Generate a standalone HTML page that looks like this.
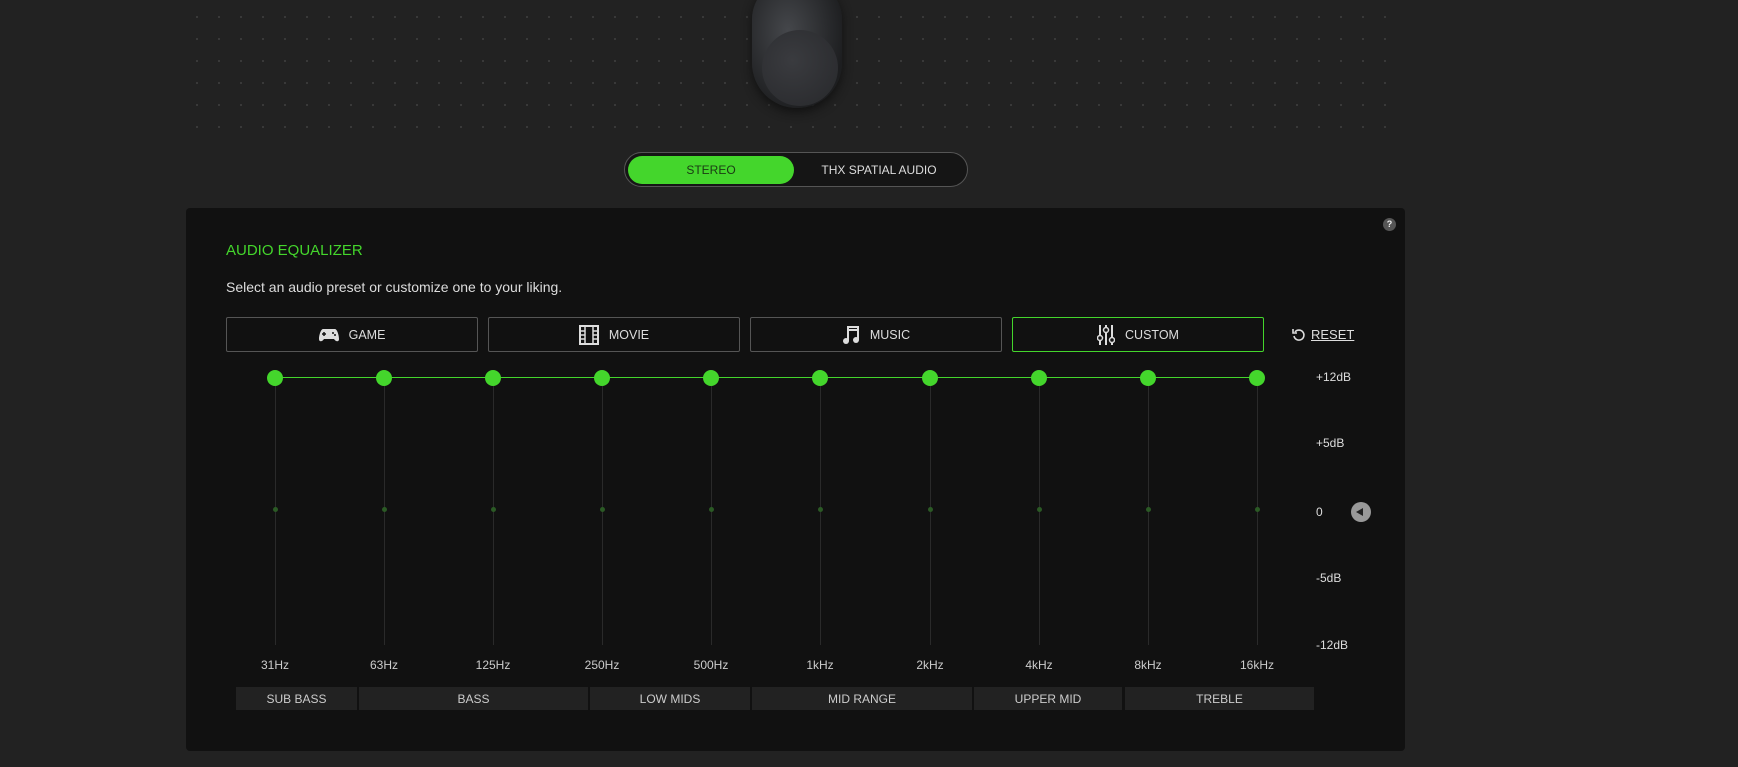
<!DOCTYPE html>
<html><head><style>
*{margin:0;padding:0;box-sizing:border-box}
body{width:1738px;height:767px;background:#222;position:relative;overflow:hidden;font-family:"Liberation Sans",sans-serif;color:#ddd}
.a{position:absolute}
.dots{left:186px;top:6px;width:1220px;height:130px;background-image:radial-gradient(circle,#3a3a3a 1px,transparent 1.3px);background-size:22px 22px}
.panel{left:186px;top:208px;width:1219px;height:543px;background:#111;border-radius:4px}
.btn{top:317px;height:35px;width:252px;border:1px solid #555;border-radius:2px;display:flex;align-items:center;justify-content:center;font-size:12.5px;color:#ddd;gap:10px}
.lbl{font-size:12px;color:#ddd}
.track{width:1px;background:#2a2a2a;top:378px;height:267px}
.dot{width:16px;height:16px;border-radius:50%;background:#44d62c;top:370px}
.z{width:5px;height:5px;border-radius:50%;background:#2b5a25;top:507px}
.freq{top:658px;font-size:12px;color:#ccc;width:80px;text-align:center}
.cat{top:687px;height:23px;background:#222;font-size:12px;color:#ccc;display:flex;align-items:center;justify-content:center}
</style></head><body>
<div class="a dots"></div>
<div class="a" style="left:752px;top:-20px;width:90px;height:128px;border-radius:40px 40px 46px 46px;background:radial-gradient(ellipse at 40% 40%,#45474b,#1d1e20 75%);box-shadow:0 4px 10px #111"></div>
<div class="a" style="left:762px;top:30px;width:76px;height:76px;border-radius:38px;background:radial-gradient(ellipse at 40% 40%,#3a3b3f,#27282b)"></div>
<div class="a" style="left:624px;top:152px;width:344px;height:35px;border:1px solid #555;border-radius:18px;background:#151515"></div>
<div class="a" style="left:628px;top:156px;width:166px;height:28px;border-radius:14px;background:#44d62c;color:#1a3a14;font-size:12px;display:flex;align-items:center;justify-content:center">STEREO</div>
<div class="a" style="left:794px;top:156px;width:170px;height:28px;color:#ddd;font-size:12px;display:flex;align-items:center;justify-content:center">THX SPATIAL AUDIO</div>
<div class="a panel"></div>
<div class="a" style="left:1383px;top:218px;width:13px;height:13px;border-radius:50%;background:#555;color:#eee;font-size:9px;font-weight:bold;text-align:center;line-height:13px">?</div>
<div class="a" style="left:226px;top:242px;font-size:15px;color:#44d62c">AUDIO EQUALIZER</div>
<div class="a" style="left:226px;top:279px;font-size:14px;color:#ddd">Select an audio preset or customize one to your liking.</div>
<div class="a btn" style="left:226px"><svg width="20" height="14" viewBox="0 0 20 14"><path d="M4 1h12c2 0 4 6 4 10 0 3-3 3-5 0H5c-2 3-5 3-5 0C0 7 2 1 4 1z" fill="#ddd"/><path d="M5 4v4M3 6h4" stroke="#111" stroke-width="1.5"/><circle cx="14" cy="5" r="1" fill="#111"/><circle cx="16" cy="7" r="1" fill="#111"/></svg>GAME</div>
<div class="a btn" style="left:488px"><svg width="20" height="20" viewBox="0 0 20 20"><rect x="1" y="1" width="18" height="18" fill="none" stroke="#ddd" stroke-width="2"/><path d="M6 1v18M14 1v18M1 6h5M1 10h5M1 14h5M14 6h5M14 10h5M14 14h5" stroke="#ddd" stroke-width="1.5"/></svg>MOVIE</div>
<div class="a btn" style="left:750px"><svg width="18" height="20" viewBox="0 0 18 20"><path d="M6 16V2h10v13M6 5h10" stroke="#ddd" stroke-width="2" fill="none"/><circle cx="4" cy="16" r="3" fill="#ddd"/><circle cx="14" cy="15" r="3" fill="#ddd"/></svg>MUSIC</div>
<div class="a btn" style="left:1012px;border-color:#44d62c"><svg width="18" height="20" viewBox="0 0 18 20"><path d="M3 0v20M9 0v20M15 0v20" stroke="#ddd" stroke-width="2"/><circle cx="3" cy="13" r="2.5" fill="#111" stroke="#ddd" stroke-width="1.5"/><circle cx="9" cy="5" r="2.5" fill="#111" stroke="#ddd" stroke-width="1.5"/><circle cx="15" cy="15" r="2.5" fill="#111" stroke="#ddd" stroke-width="1.5"/></svg>CUSTOM</div>
<div class="a" style="left:1292px;top:327px;font-size:13px;color:#ddd;display:flex;gap:5px;align-items:center"><svg width="14" height="14" viewBox="0 0 14 14"><path d="M3 4a5 5 0 1 1-1 4" fill="none" stroke="#ddd" stroke-width="1.6"/><path d="M1 1v4h4" fill="none" stroke="#ddd" stroke-width="1.6"/></svg><span style="text-decoration:underline">RESET</span></div>
<div class="a" style="left:275px;top:377px;width:982px;height:1px;background:#44d62c"></div>
<div class="a lbl" style="left:1316px;top:370px">+12dB</div>
<div class="a lbl" style="left:1316px;top:436px">+5dB</div>
<div class="a lbl" style="left:1316px;top:505px">0</div>
<div class="a lbl" style="left:1316px;top:571px">-5dB</div>
<div class="a lbl" style="left:1316px;top:638px">-12dB</div>
<div class="a" style="left:1351px;top:502px;width:20px;height:20px;border-radius:50%;background:#999"><div style="position:absolute;left:5px;top:6px;border-right:7px solid #222;border-top:4px solid transparent;border-bottom:4px solid transparent"></div></div>
<div id="s"></div>
<script>
var xs=[275,384,493,602,711,820,930,1039,1148,1257],f=["31Hz","63Hz","125Hz","250Hz","500Hz","1kHz","2kHz","4kHz","8kHz","16kHz"],h="";
xs.forEach(function(x,i){h+='<div class="a track" style="left:'+x+'px"></div><div class="a dot" style="left:'+(x-8)+'px"></div><div class="a z" style="left:'+(x-2)+'px"></div><div class="a freq" style="left:'+(x-40)+'px">'+f[i]+'</div>';});
var c=[[236,357,"SUB BASS"],[359,588,"BASS"],[590,750,"LOW MIDS"],[752,972,"MID RANGE"],[974,1122,"UPPER MID"],[1125,1314,"TREBLE"]];
c.forEach(function(k){h+='<div class="a cat" style="left:'+k[0]+'px;width:'+(k[1]-k[0])+'px">'+k[2]+'</div>';});
document.getElementById("s").innerHTML=h;
</script>
</body></html>
